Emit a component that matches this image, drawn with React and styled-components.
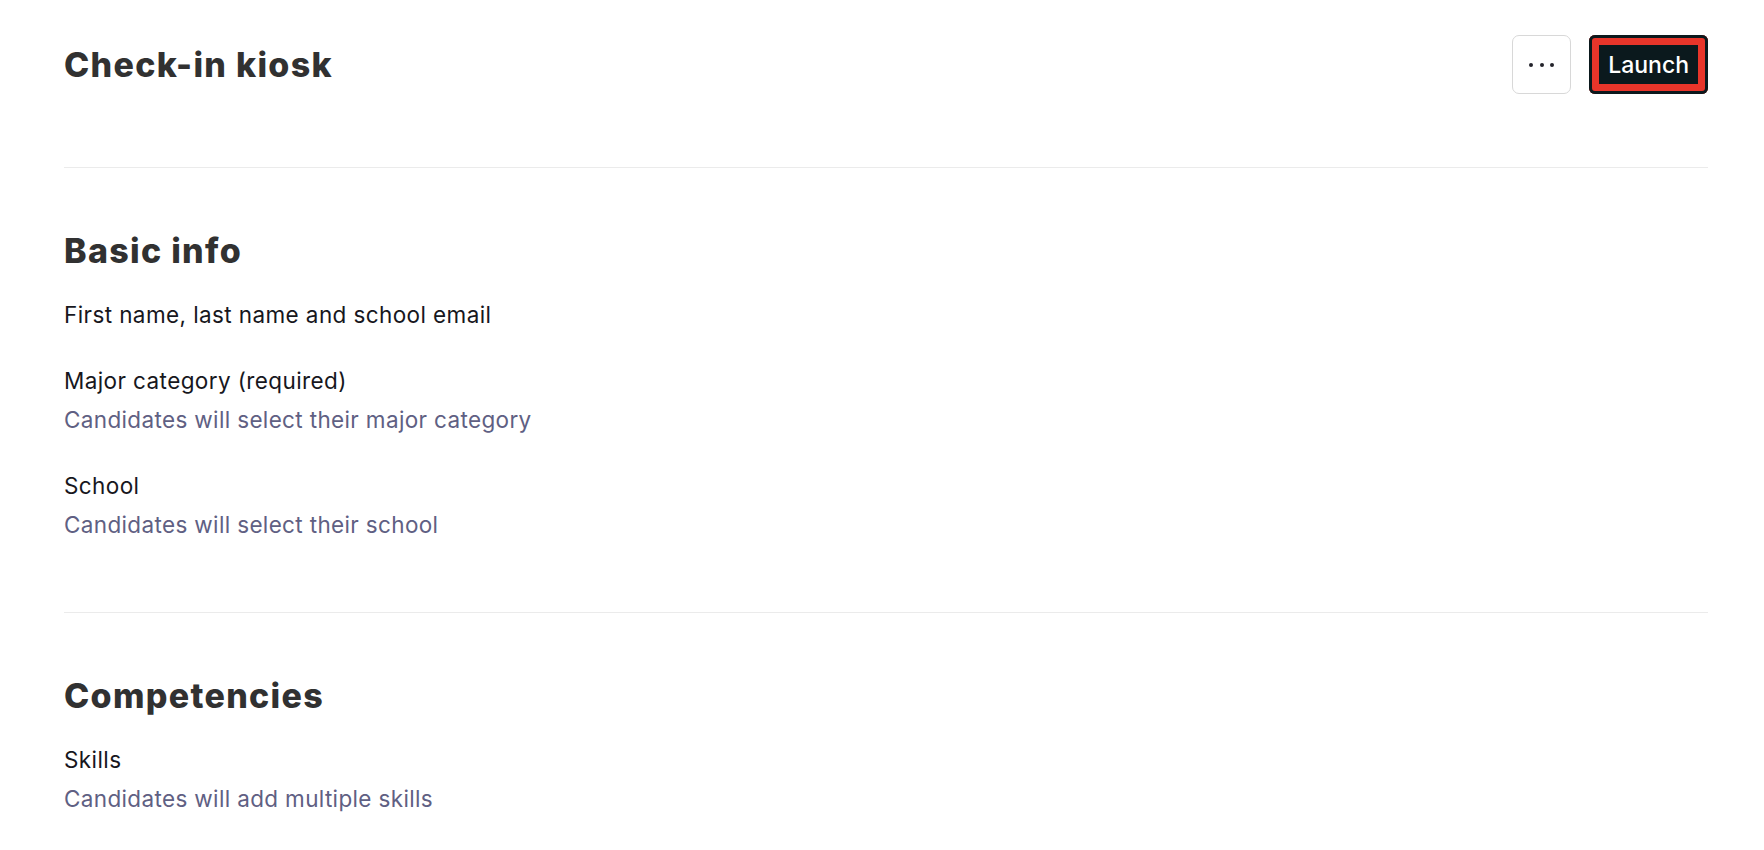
import styled, { createGlobalStyle } from "styled-components";

const GlobalStyle = createGlobalStyle`
  body {
    margin: 0;
    background: #ffffff;
    font-family: Inter, "Noto Sans", sans-serif;
  }
`;

const Page = styled.div`
  padding: 0 56px 0 64px;
`;

const Header = styled.header`
  display: flex;
  align-items: center;
  justify-content: space-between;
  padding: 35px 0 73px;
  border-bottom: 1px solid #ebebeb;
`;

const Title = styled.h1`
  margin: 0;
  font-size: 34px;
  line-height: 40px;
  font-weight: 800;
  color: #313131;
  letter-spacing: 1.3px;
`;

const Actions = styled.div`
  display: flex;
  align-items: center;
  gap: 18px;
`;

const MoreButton = styled.button`
  width: 59px;
  height: 59px;
  display: flex;
  align-items: center;
  justify-content: center;
  gap: 6.5px;
  padding: 0;
  background: #ffffff;
  border: 1px solid #d8d8d8;
  border-radius: 7px;
  cursor: pointer;
`;

const Dot = styled.span`
  width: 4px;
  height: 4px;
  border-radius: 50%;
  background: #23232b;
`;

const LaunchButton = styled.button`
  height: 59px;
  padding: 0 19px;
  background: #0b191d;
  color: #ffffff;
  border: none;
  border-radius: 6px;
  box-shadow: inset 0 0 0 3px #0b191d, inset 0 0 0 10px #e8352a;
  font-family: Inter, sans-serif;
  font-size: 23px;
  font-weight: 500;
  cursor: pointer;
`;

const Section = styled.section`
  padding: 63px 0 72px;
  border-bottom: ${(p) => (p.$last ? "none" : "1px solid #ebebeb")};
`;

const SectionTitle = styled.h2`
  margin: 0 0 29px;
  font-size: 34px;
  line-height: 40px;
  font-weight: 800;
  color: #313131;
  letter-spacing: 1.3px;
`;

const FieldList = styled.div`
  display: flex;
  flex-direction: column;
  gap: 36px;
`;

const Field = styled.div`
  display: flex;
  flex-direction: column;
  gap: 9px;
`;

const Label = styled.div`
  font-size: 22.5px;
  line-height: 30px;
  letter-spacing: 0.4px;
  color: #17171d;
`;

const Hint = styled.div`
  font-size: 22.5px;
  line-height: 30px;
  letter-spacing: 0.35px;
  color: #5f6083;
`;

const sections = [
  {
    title: "Basic info",
    fields: [
      { label: "First name, last name and school email" },
      {
        label: "Major category (required)",
        hint: "Candidates will select their major category",
      },
      { label: "School", hint: "Candidates will select their school" },
    ],
  },
  {
    title: "Competencies",
    fields: [{ label: "Skills", hint: "Candidates will add multiple skills" }],
  },
];

export default function App() {
  return (
    <>
      <GlobalStyle />
      <Page>
        <Header>
          <Title>Check-in kiosk</Title>
          <Actions>
            <MoreButton aria-label="More">
              <Dot />
              <Dot />
              <Dot />
            </MoreButton>
            <LaunchButton>Launch</LaunchButton>
          </Actions>
        </Header>
        {sections.map((s, i) => (
          <Section key={s.title} $last={i === sections.length - 1}>
            <SectionTitle>{s.title}</SectionTitle>
            <FieldList>
              {s.fields.map((f) => (
                <Field key={f.label}>
                  <Label>{f.label}</Label>
                  {f.hint && <Hint>{f.hint}</Hint>}
                </Field>
              ))}
            </FieldList>
          </Section>
        ))}
      </Page>
    </>
  );
}
